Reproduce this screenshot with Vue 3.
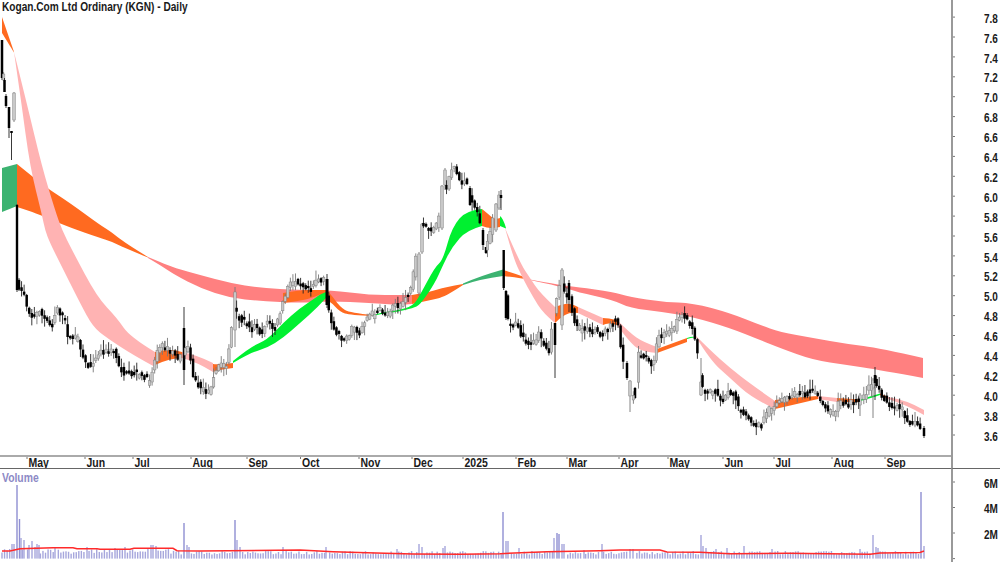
<template>
  <div class="chart">
    <div class="pane price-pane">
      <div class="title">Kogan.Com Ltd Ordinary (KGN) - Daily</div>
      <svg width="951" height="455" viewBox="0 0 951 455">
        <path v-for="(b, i) in bands" :key="i" :d="b.d" :fill="b.color" />
        <g v-for="(c, i) in candles" :key="'c' + i">
          <line :x1="c.x" :x2="c.x" :y1="c.hi" :y2="c.lo" :stroke="c.down ? '#222' : '#777'" stroke-width="0.9" />
          <rect
            :x="c.x - c.w / 2"
            :y="c.top"
            :width="c.w"
            :height="c.bot - c.top"
            :class="c.down ? 'body-down' : 'body-up'"
          />
        </g>
      </svg>
    </div>
    <div class="axis">
      <svg width="47" height="455" viewBox="953 0 47 455">
        <g v-for="t in priceTicks" :key="t.label">
          <line x1="953" x2="955" :y1="t.y" :y2="t.y" class="tick" />
          <text :transform="`translate(984 ${t.y + 5.6}) scale(0.8 1)`" class="label">{{ t.label }}</text>
        </g>
      </svg>
    </div>

    <div class="dates">
      <svg width="951" height="11" viewBox="0 457 951 11">
        <g v-for="m in months" :key="m.x">
          <line :x1="m.x" :x2="m.x" y1="457" y2="459" class="tick" />
          <text :transform="`translate(${m.x + 1.5} 466.6) scale(0.84 1)`" class="label">{{ m.label }}</text>
        </g>
      </svg>
    </div>
    <div class="axis corner"></div>

    <div class="pane volume-pane">
      <div class="vol-title">Volume</div>
      <svg width="951" height="93" viewBox="0 469 951 93">
        <rect
          v-for="(v, i) in volumes"
          :key="i"
          :x="v.x - 0.7"
          :y="v.y"
          width="1.4"
          :height="558.6 - v.y"
          :fill="v.spike ? '#8f8fd2' : '#a6a6dc'"
        />
        <polyline :points="volumeAvg" fill="none" stroke="#ff2a2a" stroke-width="1.5" />
      </svg>
    </div>
    <div class="axis">
      <svg width="47" height="93" viewBox="953 469 47 93">
        <line v-for="y in [482, 507.5, 533, 558.6]" :key="y" x1="953" x2="955" :y1="y" :y2="y" class="tick" />
        <text
          v-for="t in volTicks"
          :key="t.label"
          :transform="`translate(984 ${t.y + 5.6}) scale(0.8 1)`"
          class="label"
        >{{ t.label }}</text>
      </svg>
    </div>
  </div>
</template>

<script setup>
const ORANGE = '#ff6a20'
const RED = '#ff8080'
const PINK = '#ffb3b3'
const LIME = '#00f030'
const GREEN = '#3cb371'

// [x, top, bottom] in page pixels
const bandRows = [
  [GREEN, [[2, 168, 212], [17, 164, 206]]],
  [ORANGE, [[17, 164, 207], [33, 177, 212], [47, 188, 218], [70, 203, 227.5], [100, 225, 238], [110, 231, 241], [125, 243, 248], [148, 257, 257.6]]],
  [RED, [[148, 257, 258], [160, 262, 265], [175, 268, 275], [200, 275, 288], [230, 283, 298], [260, 288, 301], [300, 290, 303], [330, 290, 301], [370, 295, 303], [400, 295, 305], [412, 295, 304]]],
  [ORANGE, [[412, 295, 304], [430, 292, 300], [445, 287, 297], [463, 284, 285]]],
  [GREEN, [[463, 283.5, 285], [480, 276, 279], [503, 269.5, 276]]],
  [ORANGE, [[503, 270, 276], [520, 275, 278], [530, 279.5, 280]]],
  [RED, [[530, 279.5, 280], [563, 285.5, 287], [577, 287, 292], [613, 292, 300], [630, 297, 308], [663, 302, 312], [693, 303, 317], [730, 313, 328], [760, 325, 340], [780, 332, 348], [813, 338, 360], [847, 344, 365], [880, 348, 370], [923, 358, 378]]],

  [ORANGE, [[2, 17, 33], [14, 52, 52.5]]],
  [ORANGE, [[155, 352, 365], [170, 348, 358], [182, 352, 358]]],
  [PINK, [[182, 352, 358], [197, 355, 362], [213, 363, 372]]],
  [ORANGE, [[213, 364, 372], [217, 365, 370], [233, 363, 368]]],
  [LIME, [[233, 361, 363], [250, 347, 353], [267, 340, 348], [283, 323, 338], [300, 308, 323], [317, 297, 308], [326, 290, 298]]],
  [ORANGE, [[283, 293, 303], [300, 290, 301], [315, 290, 297], [326, 290, 292]]],
  [ORANGE, [[326, 290, 300], [330, 293, 301], [340, 307, 312], [350, 313, 315], [373, 315, 316]]],
  [LIME, [[373, 315, 316], [380, 312.5, 314], [397, 310.5, 312], [413, 306, 308], [420, 295, 305], [435, 267, 283], [443, 260, 265], [452, 227, 247], [467, 210, 230], [482, 209, 226]]],
  [ORANGE, [[482, 209, 226], [487, 213, 228], [495, 220, 228], [500, 218, 227]]],
  [LIME, [[500, 216, 226], [503, 218, 227], [506, 228, 228.5]]],
  [ORANGE, [[555, 307, 323], [560, 305, 318], [570, 303, 312], [578, 307, 313]]],
  [PINK, [[578, 307, 313], [603, 318, 325]]],
  [ORANGE, [[603, 318, 325], [608, 318, 322], [617, 320, 325]]],
  [PINK, [[617, 320, 325], [630, 333, 343], [643, 342, 352], [657, 347, 353]]],
  [ORANGE, [[657, 349, 353], [687, 338, 342]]],
  [LIME, [[687, 338, 339], [692, 336, 337], [696, 337, 337.5]]],
  [PINK, [[696, 336, 337], [710, 350, 360], [730, 368, 378], [752, 385, 398], [775, 401, 409]]],
  [ORANGE, [[775, 400, 409], [797, 397, 404], [818, 396, 399]]],
  [PINK, [[818, 396, 399], [837, 398, 402]]],
  [ORANGE, [[837, 398, 402], [860, 399.5, 402]]],
  [LIME, [[860, 399.5, 401], [868, 397, 399], [880, 393.5, 395]]],
  [ORANGE, [[880, 393.5, 395], [888, 397, 399]]],
  [PINK, [[888, 397, 399], [907, 400, 405], [924, 410, 415]]]
]

// rounds the corners of an edge, ends stay where they are
const curve = (pts) => {
  let d = ''
  for (let i = 1; i < pts.length - 1; i++) {
    const mx = (pts[i][0] + pts[i + 1][0]) / 2
    const my = (pts[i][1] + pts[i + 1][1]) / 2
    d += ` Q${pts[i][0]} ${pts[i][1]} ${i === pts.length - 2 ? pts[i + 1].join(' ') : mx + ' ' + my}`
  }
  if (pts.length === 2) d = ` L${pts[1].join(' ')}`
  return d
}
const bandPath = (top, bot) => `M${top[0].join(' ')}${curve(top)} L${bot[0].join(' ')}${curve(bot)} Z`

const bands = bandRows.map(([color, rows]) => ({
  color,
  d: bandPath(
    rows.map((r) => [r[0], r[1]]),
    rows.slice().reverse().map((r) => [r[0], r[2]])
  )
}))

// the long pink runs off the two peaks have their own edges
bands.push({
  color: PINK,
  d: bandPath(
    [[14, 52], [26, 100], [42, 167], [55, 210], [62, 230], [72, 250], [97, 297], [117, 318], [130, 337], [155, 352]],
    [[155, 367], [133, 355], [107, 338], [93, 327], [80, 303], [60, 263], [50, 243], [45, 230], [42, 215], [30, 167], [21, 100], [14, 52]]
  )
})
bands.push({
  color: PINK,
  d: bandPath(
    [[505, 228], [520, 263], [530, 278], [540, 293], [555, 307]],
    [[555, 323], [543, 313], [533, 297], [522, 277], [513, 257], [505, 228]]
  )
})

// close path read off the chart, x -> y
const path = [
  [19, 285], [22, 290], [25, 292], [29, 310], [33, 315], [37, 317], [40, 307], [44, 318], [47, 320], [52, 325], [55, 320], [58, 305], [62, 315], [66, 320], [70, 340], [75, 335], [80, 340], [85, 360], [90, 365], [95, 360], [100, 352], [105, 350], [110, 352], [115, 350], [120, 365], [125, 374], [135, 372], [145, 376], [150, 382], [155, 365], [158, 350], [165, 345], [170, 350], [175, 353], [180, 360], [190, 345], [195, 380], [200, 385], [205, 390], [210, 392], [215, 375], [222, 363], [228, 365], [235, 310], [240, 318], [247, 322], [253, 327], [258, 325], [262, 335], [268, 320], [275, 330], [280, 318], [285, 300], [290, 285], [297, 280], [305, 285], [312, 288], [318, 278], [325, 280], [330, 310], [335, 330], [340, 335], [345, 338], [350, 335], [355, 325], [360, 335], [365, 322], [370, 315], [380, 310], [390, 313], [395, 300], [400, 310], [405, 300], [412, 290], [417, 260], [420, 225], [425, 225], [430, 230], [435, 230], [440, 220], [443, 180], [447, 190], [452, 170], [455, 165], [460, 180], [465, 180], [470, 190], [475, 205], [480, 215], [483, 240], [487, 250], [490, 240], [495, 215], [498, 200], [501, 196], [508, 320], [513, 325], [518, 320], [522, 335], [528, 340], [533, 345], [540, 335], [545, 345], [550, 355], [556, 305], [562, 280], [565, 290], [570, 295], [575, 320], [578, 328], [583, 328], [588, 330], [592, 330], [597, 330], [602, 335], [608, 330], [612, 323], [618, 318], [622, 345], [626, 368], [630, 395], [636, 392], [640, 352], [645, 355], [650, 360], [653, 365], [656, 355], [660, 335], [665, 335], [670, 330], [675, 330], [680, 318], [685, 315], [690, 320], [695, 335], [698, 345], [703, 388], [706, 392], [712, 390], [715, 388], [720, 395], [725, 400], [730, 388], [735, 392], [740, 410], [748, 415], [752, 425], [760, 425], [765, 420], [770, 410], [775, 405], [780, 402], [793, 395], [807, 390], [818, 393], [825, 405], [830, 410], [837, 412], [840, 400], [847, 403], [852, 402], [860, 400], [868, 392], [875, 378], [878, 385], [883, 395], [890, 405], [895, 405], [903, 408], [907, 418], [915, 423], [920, 425], [924, 434]
]

const yAt = (pts, x) => {
  for (let i = 1; i < pts.length; i++) {
    if (x <= pts[i][0]) {
      const [x0, y0] = pts[i - 1]
      const [x1, y1] = pts[i]
      return y0 + ((y1 - y0) * (x - x0)) / (x1 - x0)
    }
  }
  return pts[pts.length - 1][1]
}

let seed = 7
const rnd = () => {
  seed = (seed * 16807) % 2147483647
  return seed / 2147483647
}

// candles that stand out: [x, high, bodyTop, bodyBottom, low, down?, width]
const bigCandles = [
  [2, 40, 40, 78, 80, 1], [3.6, 72, 74, 80, 80, 0], [4.5, 78, 80, 92, 92, 1], [6, 94, 96, 106, 108, 1], [9, 107, 107, 128, 138, 1], [11.5, 131, 131, 133, 160, 1], [14, 92, 93, 120, 122, 0], [17, 204, 205, 290, 292, 1, 2.4],
  [184, 307, 328, 370, 385, 1], [235, 287, 292, 330, 347, 0], [327, 274, 279, 305, 308, 1, 3], [419, 252, 254, 293, 296, 0], [422, 223, 224, 252, 254, 0], [442, 185, 186, 228, 230, 0], [445, 168, 170, 185, 190, 0],
  [470, 186, 188, 205, 206, 1], [483, 228, 230, 245, 250, 1], [486, 247, 247, 253, 254, 1], [496, 203, 204, 230, 232, 0], [499, 191, 195, 208, 210, 0], [501, 190, 195, 198, 210, 1], [503.7, 265, 250, 288, 290, 1, 2.4], [506, 290, 291, 318, 320, 1],
  [555, 323, 323, 345, 378, 1], [562, 268, 270, 325, 330, 0], [569, 280, 283, 300, 312, 1], [627, 361, 363, 378, 380, 1], [630, 380, 381, 396, 412, 0], [635, 387, 388, 398, 399, 1], [701, 358, 382, 395, 396, 0],
  [860, 393, 395, 405, 416, 0], [873, 378, 380, 388, 418, 0], [875, 367, 375, 383, 400, 1], [924, 426, 428, 436, 438, 1]
]
const isBig = (x) => bigCandles.some((c) => Math.abs(c[0] - x) < 1.3)

const candles = bigCandles.map(([x, hi, top, bot, lo, down, w]) => ({ x, hi, top, bot, lo, down: !!down, w: w || 2.5 }))

const last = 922
for (let x = 19; x <= last; x += 2.56) {
  const r1 = rnd()
  const r2 = rnd()
  const r3 = rnd()
  const r4 = rnd()
  const r5 = rnd()
  if (isBig(x)) continue
  const open = yAt(path, x - 1.3) + (r1 - 0.5) * 6
  const close = yAt(path, x + 1.3) + (r2 - 0.5) * 6
  const top = Math.min(open, close)
  const bot = Math.max(Math.max(open, close), top + 2 + r5 * 3)
  candles.push({
    x,
    hi: top - 1 - r3 * r3 * 9,
    top,
    bot,
    lo: bot + 1 + r4 * r4 * 8,
    down: close > open,
    w: 2.5
  })
}

const priceTicks = []
for (let i = 0; i <= 21; i++) {
  priceTicks.push({ label: (3.6 + i * 0.2).toFixed(1), y: 435 - i * 19.9 })
}

const months = [
  ['May', 27], ['Jun', 85], ['Jul', 133], ['Aug', 191], ['Sep', 247], ['Oct', 300.5], ['Nov', 359], ['Dec', 412], ['2025', 463],
  ['Feb', 516], ['Mar', 567], ['Apr', 619], ['May', 668], ['Jun', 723], ['Jul', 774], ['Aug', 832], ['Sep', 885]
].map(([label, x]) => ({ label, x }))

const volTicks = [
  { label: '6M', y: 482 },
  { label: '4M', y: 507.5 },
  { label: '2M', y: 533 }
]

const spikes = [
  [12, 544], [14, 544], [17, 485], [19.5, 519], [21, 538], [24, 540], [29, 545], [32, 541], [35, 547], [37, 544], [39, 545], [55, 548], [87, 547], [115, 548], [125, 547], [151, 545], [153, 545], [156, 546], [184, 523], [187, 545], [189, 547], [235, 520], [237, 540], [240, 547], [283, 547],
  [326, 547], [397, 549], [419, 544], [422, 547], [443, 548], [445, 546], [503, 512], [506, 541], [508, 541], [519, 548], [554, 538], [557, 533], [559, 534], [562, 544], [564, 544], [584, 550],
  [602, 544], [630, 549], [633, 549], [701, 535], [703, 546], [706, 548], [716, 549], [727, 548], [744, 546], [772, 549], [860, 549], [873, 535], [876, 547], [878, 548], [921, 492], [924, 546]
]

const volumes = spikes.map(([x, y]) => ({ x, y, spike: y < 535 }))
for (let x = 2; x <= last; x += 2.56) {
  const r = rnd()
  if (spikes.some((s) => Math.abs(s[0] - x) < 1.4)) continue
  const early = x < 180 ? 3 : 0
  volumes.push({ x, y: 554.5 - r * 3.5 - early * rnd() })
}

const volumeAvg = [
  [2, 551], [10, 551], [20, 548.7], [53, 547.7], [73, 547.7], [77, 548.7], [97, 548.7], [100, 549.3], [130, 549.3], [134, 548.3], [173, 548.3], [177, 550.7], [200, 551], [300, 550], [333, 551.7], [367, 552.7], [413, 554], [460, 554.3], [500, 553.7], [547, 551.7], [600, 550.7], [620, 550], [660, 550], [667, 552], [700, 552.3], [730, 553.7], [787, 553.3], [870, 554.3], [880, 553], [920, 552.5], [924, 551]
].map((p) => p.join(',')).join(' ')
</script>

<style>
body {
  background: #fff;
}
</style>

<style scoped>
.chart {
  display: grid;
  grid-template-columns: 951px 49px;
  grid-template-rows: 455px 14px 93px;
  width: 1000px;
  height: 562px;
  overflow: hidden;
  background: #fff;
  font-family: "Liberation Sans", Arial, sans-serif;
}
.pane {
  position: relative;
}
.pane svg,
.axis svg,
.dates svg {
  display: block;
}
.title {
  position: absolute;
  left: 2px;
  top: 0;
  font-size: 12.5px;
  font-weight: bold;
  line-height: 15px;
  color: #1a1a1a;
  white-space: nowrap;
  transform: scaleX(0.81);
  transform-origin: left top;
}
.vol-title {
  position: absolute;
  left: 2px;
  top: 2px;
  font-size: 12.5px;
  font-weight: bold;
  line-height: 15px;
  color: #8d8ac6;
  transform: scaleX(0.83);
  transform-origin: left top;
}
.axis {
  border-left: 2px solid #999;
}
.corner {
  border-bottom: 1px solid #666;
}
.dates {
  border-top: 2px solid #aaa;
  border-bottom: 1px solid #666;
}
.tick {
  stroke: #777;
  stroke-width: 1;
}
.label {
  font-size: 12.5px;
  font-weight: bold;
  fill: #1a1a1a;
}
.body-down {
  fill: #000;
}
.body-up {
  fill: #c8c8c8;
  stroke: #808080;
  stroke-width: 0.5;
}
</style>
